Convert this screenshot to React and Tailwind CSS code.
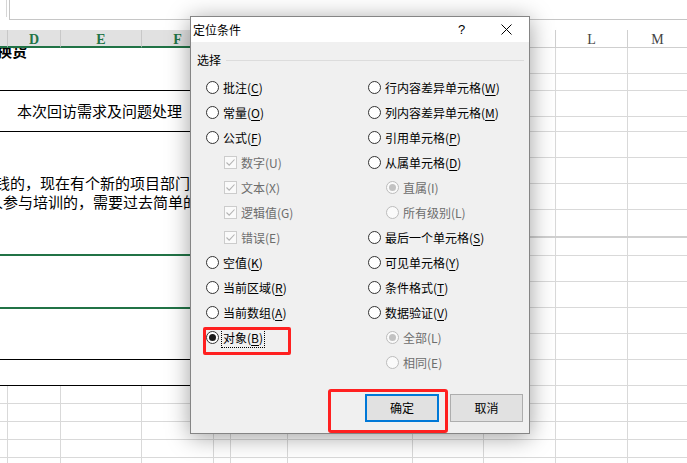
import React from 'react';

const leftCols = ['w-[8px]', 'w-[53px]', 'w-[81px]', 'w-[72px]', 'w-[17px]', 'w-[57px]', 'w-[125px]', 'w-[71px]'];

const rightRows = [
  'h-[26px] border-b border-[#d9d9d9]',
  'h-[17px] border-b border-[#d9d9d9]',
  'h-[26px] border-b border-[#d9d9d9]',
  'h-[15px] border-b border-[#d9d9d9]',
  'h-[26px] border-b border-[#d9d9d9]',
  'h-[26px] border-b border-[#d9d9d9]',
  'h-[26px] border-b border-[#d9d9d9]',
  'h-[28px] border-b-2 border-[#d0d0d0]',
  'h-[18px] border-b border-[#d9d9d9]',
  'h-[26px] border-b border-[#d9d9d9]',
  'h-[26px] border-b border-[#d9d9d9]',
  'h-[26px] border-b border-[#d9d9d9]',
  'h-[26px] border-b border-[#d9d9d9]',
  'h-[26px] border-b border-[#d9d9d9]',
  'h-[18px] border-b border-[#d9d9d9]',
  'h-[18px] border-b border-[#d9d9d9]',
  'h-[18px] border-b border-[#d9d9d9]',
  'h-[18px] border-b border-[#d9d9d9]',
  'h-[18px] border-b border-[#d9d9d9]',
];

function Radio({ checked, disabled }) {
  return (
    <span
      className={
        disabled
          ? 'w-[13px] h-[13px] rounded-full border border-[#bcbcbc] bg-[#fafafa] flex items-center justify-center shrink-0'
          : 'w-[13px] h-[13px] rounded-full border border-[#333333] bg-white flex items-center justify-center shrink-0'
      }
    >
      {checked && (
        <span className={disabled ? 'w-[7px] h-[7px] rounded-full bg-[#c2c2c2]' : 'w-[7px] h-[7px] rounded-full bg-[#1a1a1a]'} />
      )}
    </span>
  );
}

function Check() {
  return (
    <span className="w-[13px] h-[13px] border border-[#cccccc] bg-[#fafafa] flex items-center justify-center shrink-0">
      <svg width="11" height="11" viewBox="0 0 11 11">
        <path d="M1.5 5.5 L4.2 8.2 L9.5 2.5" fill="none" stroke="#b3b3b3" strokeWidth="1.1" />
      </svg>
    </span>
  );
}

function Item({ label, k, type = 'radio', checked, disabled, indent, focus }) {
  return (
    <div className={indent ? 'h-[25px] flex items-center pl-[18px]' : 'h-[25px] flex items-center'}>
      {type === 'check' ? <Check /> : <Radio checked={checked} disabled={disabled} />}
      {focus ? (
        <span className="ml-[2px] px-[1px] py-[1px] border border-dotted border-black whitespace-nowrap">
          {label}(<span className="underline underline-offset-2">{k}</span>)
        </span>
      ) : (
        <span className={disabled ? 'ml-[4px] text-[#6d6d6d] whitespace-nowrap' : 'ml-[4px] whitespace-nowrap'}>
          {label}
          {disabled ? `(${k})` : <>(<span className="underline underline-offset-2">{k}</span>)</>}
        </span>
      )}
    </div>
  );
}

function GridCells() {
  return (
    <>
      {leftCols.map((w, i) => (
        <div key={i} className={`${w} h-full border-r border-[#d9d9d9]`} />
      ))}
    </>
  );
}

export default function App() {
  return (
    <div className="relative w-[687px] h-[463px] overflow-hidden bg-white font-['Noto_Sans_CJK_SC','Noto_Sans',sans-serif] text-black">
      {/* formula bar */}
      <div className="flex h-[20px]">
        <div className="w-[7px] h-[17px] border-r border-[#d6d6d6]" />
        <div className="w-[2px]" />
        <div className="flex-1 border-l border-b border-[#c6c6c6]" />
      </div>
      <div className="h-[10px]" />

      {/* column headers */}
      <div className="flex h-[18px] font-['Liberation_Serif',serif] text-[14px] leading-[16px]">
        <div className="w-[8px] bg-[#e1e1e1] border-r border-[#c8c8c8] border-b-2 border-b-[#217346]" />
        <div className="w-[53px] bg-[#e1e1e1] border-r border-[#c8c8c8] border-b-2 border-b-[#217346] text-center pt-[2px] font-bold text-[#217346]">D</div>
        <div className="w-[81px] bg-[#e1e1e1] border-r border-[#c8c8c8] border-b-2 border-b-[#217346] text-center pt-[2px] font-bold text-[#217346]">E</div>
        <div className="w-[72px] bg-[#e1e1e1] border-r border-[#c8c8c8] border-b-2 border-b-[#217346] text-center pt-[2px] font-bold text-[#217346]">F</div>
        <div className="w-[17px] border-r border-b border-[#cfcfcf]" />
        <div className="w-[57px] border-r border-b border-[#cfcfcf]" />
        <div className="w-[125px] border-r border-b border-[#cfcfcf]" />
        <div className="w-[71px] border-r border-b border-[#cfcfcf]" />
        <div className="w-[72px] border-r border-b border-[#cfcfcf]" />
        <div className="w-[72px] border-r border-b border-[#cfcfcf] text-center pt-[2px] text-[#444]">L</div>
        <div className="flex-1 border-b border-[#cfcfcf] text-center pt-[2px] text-[#444]">M</div>
      </div>

      {/* sheet body */}
      <div className="flex">
        <div className="w-[484px] flex flex-col text-[15px] leading-[18px]">
          <div className="h-[43px] border-b border-black overflow-hidden">
            <div className="mt-[-6px] ml-[-3px] font-bold whitespace-nowrap">换货</div>
          </div>
          <div className="h-[41px] border-b border-black flex items-center pl-[17px] whitespace-nowrap">
            本次回访需求及问题处理
          </div>
          <div className="h-[124px] border-b-2 border-[#217346] pt-[42px] overflow-hidden whitespace-nowrap">
            <div className="ml-[-5px] h-[18px]">钱的，现在有个新的项目部门想</div>
            <div className="ml-[-12px] h-[19px] pt-[1px]">人参与培训的，需要过去简单的</div>
          </div>
          <div className="h-[53px] border-b-2 border-[#217346]" />
          <div className="h-[51px] border-b border-black" />
          <div className="h-[26px] border-b border-black" />
          <div className="h-[18px] flex border-b border-[#d9d9d9]"><GridCells /></div>
          <div className="h-[18px] flex border-b border-[#d9d9d9]"><GridCells /></div>
          <div className="h-[18px] flex border-b border-[#d9d9d9]"><GridCells /></div>
          <div className="h-[18px] flex border-b border-[#d9d9d9]"><GridCells /></div>
          <div className="h-[18px] flex border-b border-[#d9d9d9]"><GridCells /></div>
        </div>
        <div className="flex-1 flex flex-col">
          {rightRows.map((cls, i) => (
            <div key={i} className={`flex ${cls}`}>
              <div className="w-[72px] h-full border-r border-[#d9d9d9]" />
              <div className="w-[72px] h-full border-r border-[#d9d9d9]" />
              <div className="flex-1" />
            </div>
          ))}
        </div>
      </div>

      {/* dialog */}
      <div className="absolute left-[190px] top-[16px] w-[340px] h-[418px] border border-[#858585] bg-[#f0f0f0] shadow-[0_3px_22px_rgba(0,0,0,0.38)] flex flex-col text-[12px] leading-[16px]">
        <div className="h-[25px] bg-white flex items-center shrink-0">
          <span className="pl-[2px] flex-1">定位条件</span>
          <div className="w-[45px] h-full flex items-center justify-center text-[13px] font-['Liberation_Sans',sans-serif]">?</div>
          <div className="w-[45px] h-full flex items-center justify-center">
            <svg width="11" height="11" viewBox="0 0 11 11">
              <path d="M0.5 0.5 L10.5 10.5 M10.5 0.5 L0.5 10.5" stroke="#000" strokeWidth="1" />
            </svg>
          </div>
        </div>

        <div className="mt-[10px] h-[16px] flex items-center pl-[6px] pr-[5px]">
          <span>选择</span>
          <div className="flex-1 ml-[5px] h-px bg-[#dcdcdc]" />
        </div>

        <div className="mt-[7px] flex pl-[15px]">
          <div className="w-[162px] flex flex-col">
            <Item label="批注" k="C" />
            <Item label="常量" k="O" />
            <Item label="公式" k="F" />
            <Item label="数字" k="U" type="check" disabled indent />
            <Item label="文本" k="X" type="check" disabled indent />
            <Item label="逻辑值" k="G" type="check" disabled indent />
            <Item label="错误" k="E" type="check" disabled indent />
            <Item label="空值" k="K" />
            <Item label="当前区域" k="R" />
            <Item label="当前数组" k="A" />
            <Item label="对象" k="B" checked focus />
          </div>
          <div className="flex-1 flex flex-col">
            <Item label="行内容差异单元格" k="W" />
            <Item label="列内容差异单元格" k="M" />
            <Item label="引用单元格" k="P" />
            <Item label="从属单元格" k="D" />
            <Item label="直属" k="I" disabled checked indent />
            <Item label="所有级别" k="L" disabled indent />
            <Item label="最后一个单元格" k="S" />
            <Item label="可见单元格" k="Y" />
            <Item label="条件格式" k="T" />
            <Item label="数据验证" k="V" />
            <Item label="全部" k="L" disabled checked indent />
            <Item label="相同" k="E" disabled indent />
          </div>
        </div>

        <div className="mt-[19px] flex justify-end gap-[11px] pr-[6px]">
          <button className="w-[74px] h-[28px] border-2 border-[#0078d7] bg-[#e1e1e1] text-[12px] leading-[16px] flex items-center justify-center">确定</button>
          <button className="w-[73px] h-[28px] border border-[#adadad] bg-[#e1e1e1] text-[12px] leading-[16px] flex items-center justify-center">取消</button>
        </div>
      </div>

      {/* red annotation boxes */}
      <div className="absolute left-[203px] top-[327px] w-[88px] h-[28px] border-[3px] border-[#ff2020] rounded-[2px]" />
      <div className="absolute left-[328px] top-[389px] w-[120px] h-[44px] border-[3px] border-[#ff2020] rounded-[3px]" />
    </div>
  );
}
